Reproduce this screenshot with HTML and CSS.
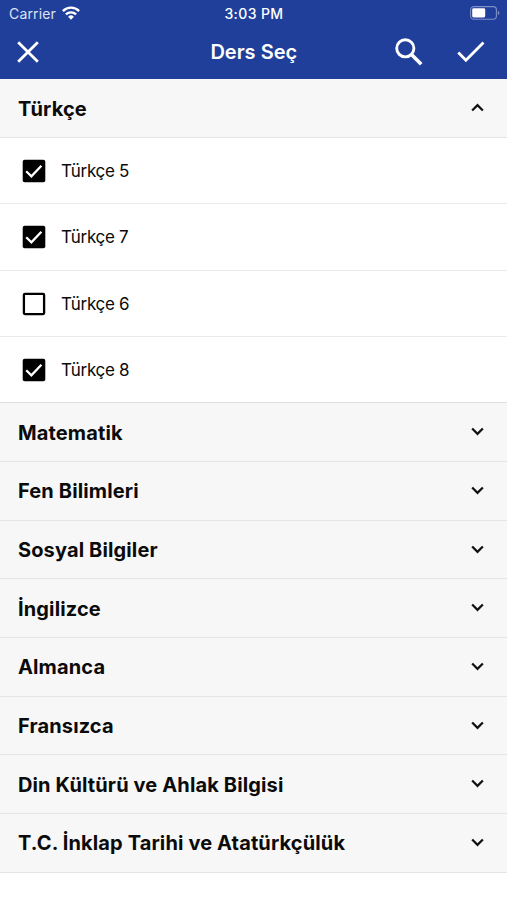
FILE: index.html
```html
<!DOCTYPE html>
<html lang="tr">
<head>
<meta charset="utf-8">
<title>Ders Seç</title>
<link rel="stylesheet" href="styles.css">
</head>
<body>
<svg class="defs" aria-hidden="true">
  <symbol id="down" viewBox="0 0 14 10"><path d="M2 2.2 7 7.2 12 2.2" fill="none" stroke="currentColor" stroke-width="2.1"/></symbol>
  <symbol id="up" viewBox="0 0 14 10"><path d="M2 7.8 7 2.8 12 7.8" fill="none" stroke="currentColor" stroke-width="2.1"/></symbol>
  <symbol id="checked" viewBox="0 0 24 24"><rect x=".7" y=".7" width="22.6" height="22.6" rx="2"/><path d="m4.2 12.2 5.2 5.1 10-10.6" fill="none" stroke="#fff" stroke-width="2.3"/></symbol>
  <symbol id="empty" viewBox="0 0 24 24"><rect x="1.9" y="1.9" width="20.2" height="20.2" rx="1" fill="#fff" stroke="currentColor" stroke-width="2.3"/></symbol>
</svg>
<header class="header">
  <div class="status">
    <div class="carrier"><span>Carrier</span>
      <svg class="wifi" viewBox="0 0 18 14"><g fill="none" stroke="#fff" stroke-width="2.3"><path d="M.9 5.1a11.4 11.4 0 0 1 16.2 0"/><path d="M3.9 8.4a7.2 7.2 0 0 1 10.2 0"/></g><path d="m9 13.7-2.9-2.9a4.1 4.1 0 0 1 5.8 0z" fill="#fff"/></svg>
    </div>
    <div class="time">3:03 PM</div>
    <svg class="battery" viewBox="0 0 30 14"><rect x=".6" y=".6" width="25.8" height="12.6" rx="3.2" fill="none" stroke="#7d8fc8" stroke-width="1.1"/><rect x="2.2" y="2.3" width="13" height="9.2" rx="1.4" fill="#fff"/><path d="M27.8 4.7c2 .7 2 3.7 0 4.4z" fill="#7d8fc8"/></svg>
  </div>
  <div class="navbar">
    <svg class="close" viewBox="0 0 22 22"><path d="m1.2 1.2 19.6 19.6M20.8 1.2 1.2 20.8" stroke="#fff" stroke-width="2.8"/></svg>
    <h1 class="title">Ders Seç</h1>
    <div class="actions">
      <svg class="search" viewBox="0 0 28 28"><circle cx="10.3" cy="10.3" r="8.6" fill="none" stroke="#fff" stroke-width="2.9"/><path d="m17 17 9.2 9.2" stroke="#fff" stroke-width="3.6"/></svg>
      <svg class="done" viewBox="0 0 28 22"><path d="m1.3 11.5 7.6 7.8L26.5 1.4" fill="none" stroke="#fff" stroke-width="2.8"/></svg>
    </div>
  </div>
</header>
<main>
  <div class="section open"><span>Türkçe</span><svg class="chevron"><use href="#up"/></svg></div>
  <div class="item"><svg class="box"><use href="#checked"/></svg><span>Türkçe 5</span></div>
  <div class="item"><svg class="box"><use href="#checked"/></svg><span>Türkçe 7</span></div>
  <div class="item"><svg class="box"><use href="#empty"/></svg><span>Türkçe 6</span></div>
  <div class="item last"><svg class="box"><use href="#checked"/></svg><span>Türkçe 8</span></div>
  <div class="section"><span>Matematik</span><svg class="chevron"><use href="#down"/></svg></div>
  <div class="section"><span>Fen Bilimleri</span><svg class="chevron"><use href="#down"/></svg></div>
  <div class="section"><span>Sosyal Bilgiler</span><svg class="chevron"><use href="#down"/></svg></div>
  <div class="section"><span>İngilizce</span><svg class="chevron"><use href="#down"/></svg></div>
  <div class="section"><span>Almanca</span><svg class="chevron"><use href="#down"/></svg></div>
  <div class="section"><span>Fransızca</span><svg class="chevron"><use href="#down"/></svg></div>
  <div class="section"><span>Din Kültürü ve Ahlak Bilgisi</span><svg class="chevron"><use href="#down"/></svg></div>
  <div class="section"><span>T.C. İnklap Tarihi ve Atatürkçülük</span><svg class="chevron"><use href="#down"/></svg></div>
</main>
</body>
</html>
```
FILE: styles.css
```css
* { box-sizing: border-box; }
body {
  margin: 0;
  background: #fff;
  color: #0b0b0b;
  font-family: Inter, "Liberation Sans", sans-serif;
}
svg { display: block; flex: none; }
.defs { display: none; }
.header {
  height: 79px;
  background: #203f9a;
  color: #fff;
}
.status {
  display: grid;
  grid-template-columns: 1fr auto 1fr;
  align-items: center;
  height: 26px;
  padding: 0 7px 0 9px;
  font-size: 14px;
}
.carrier { display: flex; align-items: center; gap: 6px; color: #dce3f5; letter-spacing: .15px; }
.wifi { width: 18px; height: 14px; }
.time { margin-left: -1px; font-size: 14px; font-weight: 550; letter-spacing: .4px; }
.battery { width: 30px; height: 14px; justify-self: end; }
.navbar {
  display: grid;
  grid-template-columns: 1fr auto 1fr;
  align-items: center;
  height: 52px;
  padding: 0 22.5px 0 17px;
}
.close { width: 22px; height: 22px; }
.title { margin: 0 -3px 0 3px; font-size: 20px; font-weight: 600; }
.actions { display: flex; align-items: center; justify-content: flex-end; gap: 34px; }
.search { width: 28px; height: 28px; }
.done { width: 28px; height: 22px; }
.section {
  display: flex;
  align-items: center;
  justify-content: space-between;
  height: 58.67px;
  padding: 1px 22px 0 18px;
  background: #f7f7f7;
  border-bottom: 1px solid #e4e4e4;
  font-size: 20px;
  font-weight: 650;
  letter-spacing: .13px;
}
.open { height: 59px; }
.chevron { width: 15px; height: 11px; margin-bottom: 1.5px; color: #111; }
.item {
  display: flex;
  align-items: center;
  gap: 15px;
  height: 66.33px;
  padding: 1px 0 0 22px;
  border-bottom: 1px solid #ebebeb;
  font-size: 17px;
  letter-spacing: -.3px;
}
.last { border-bottom-color: #e0e0e0; }
.box { width: 24px; height: 24px; color: #000; }
```
